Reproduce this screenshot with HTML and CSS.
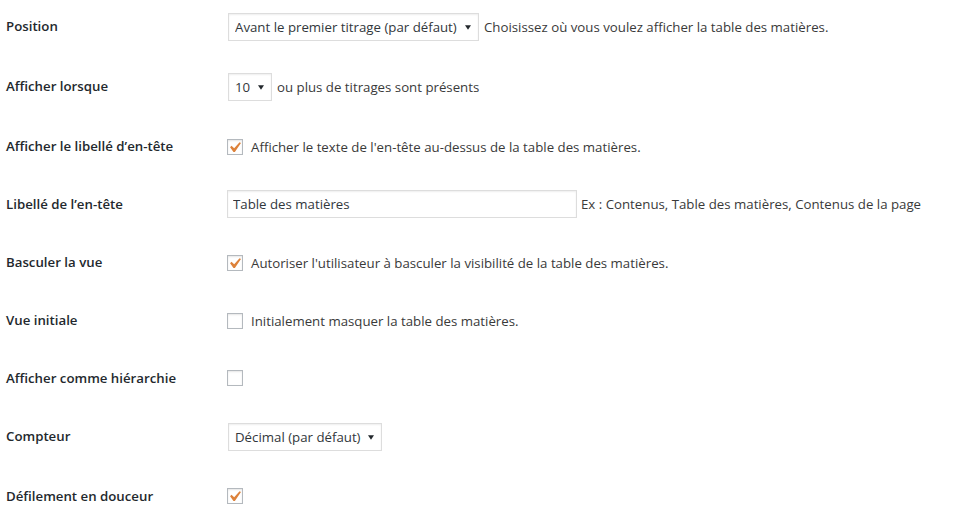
FILE: index.html
```html
<!DOCTYPE html>
<html lang="fr">
<head>
    <meta charset="UTF-8">
    <meta name="viewport" content="width=device-width, initial-scale=1.0">
    <title>Table des matières - Réglages</title>
    <link rel="stylesheet" href="styles.css">
</head>
<body>
    <table class="form-table">
        <tbody>
            <tr>
                <th scope="row">Position</th>
                <td>
                    <div class="field">
                        <span class="select select-position">
                            <select name="position">
                                <option selected>Avant le premier titrage (par défaut)</option>
                                <option>Après le premier titrage</option>
                                <option>En haut</option>
                                <option>En bas</option>
                            </select>
                            <svg class="select-arrow" width="7" height="5" viewBox="0 0 7 5"><polygon points="0,0 7,0 3.5,5"/></svg>
                        </span>
                        <span>Choisissez où vous voulez afficher la table des matières.</span>
                    </div>
                </td>
            </tr>
            <tr>
                <th scope="row">Afficher lorsque</th>
                <td>
                    <div class="field">
                        <span class="select select-count">
                            <select name="start">
                                <option>2</option>
                                <option>3</option>
                                <option selected>10</option>
                            </select>
                            <svg class="select-arrow" width="7" height="5" viewBox="0 0 7 5"><polygon points="0,0 7,0 3.5,5"/></svg>
                        </span>
                        <span>ou plus de titrages sont présents</span>
                    </div>
                </td>
            </tr>
            <tr>
                <th scope="row">Afficher le libellé d’en-tête</th>
                <td class="check-cell">
                    <label class="check-label">
                        <span class="checkbox is-checked">
                            <svg width="21" height="21" viewBox="0 0 20 20"><path d="M14.83 4.89l1.34.94-5.81 8.38H9.02L5.78 9.67l1.34-1.25 2.57 2.4z"/></svg>
                        </span>
                        Afficher le texte de l'en-tête au-dessus de la table des matières.
                    </label>
                </td>
            </tr>
            <tr>
                <th scope="row">Libellé de l’en-tête</th>
                <td>
                    <div class="field">
                        <input type="text" class="regular-text" value="Table des matières">
                        <span>Ex : Contenus, Table des matières, Contenus de la page</span>
                    </div>
                </td>
            </tr>
            <tr>
                <th scope="row">Basculer la vue</th>
                <td class="check-cell">
                    <label class="check-label">
                        <span class="checkbox is-checked">
                            <svg width="21" height="21" viewBox="0 0 20 20"><path d="M14.83 4.89l1.34.94-5.81 8.38H9.02L5.78 9.67l1.34-1.25 2.57 2.4z"/></svg>
                        </span>
                        Autoriser l'utilisateur à basculer la visibilité de la table des matières.
                    </label>
                </td>
            </tr>
            <tr>
                <th scope="row">Vue initiale</th>
                <td class="check-cell">
                    <label class="check-label">
                        <span class="checkbox"></span>
                        Initialement masquer la table des matières.
                    </label>
                </td>
            </tr>
            <tr>
                <th scope="row">Afficher comme hiérarchie</th>
                <td class="check-cell">
                    <label class="check-label">
                        <span class="checkbox"></span>
                    </label>
                </td>
            </tr>
            <tr>
                <th scope="row">Compteur</th>
                <td>
                    <div class="field">
                        <span class="select select-counter">
                            <select name="counter">
                                <option selected>Décimal (par défaut)</option>
                                <option>Chiffres romains</option>
                                <option>Aucun</option>
                            </select>
                            <svg class="select-arrow" width="7" height="5" viewBox="0 0 7 5"><polygon points="0,0 7,0 3.5,5"/></svg>
                        </span>
                    </div>
                </td>
            </tr>
            <tr>
                <th scope="row">Défilement en douceur</th>
                <td class="check-cell">
                    <label class="check-label">
                        <span class="checkbox is-checked">
                            <svg width="21" height="21" viewBox="0 0 20 20"><path d="M14.83 4.89l1.34.94-5.81 8.38H9.02L5.78 9.67l1.34-1.25 2.57 2.4z"/></svg>
                        </span>
                    </label>
                </td>
            </tr>
        </tbody>
    </table>
</body>
</html>
```

FILE: styles.css
```css
body {
    margin: 0;
    background-color: #fff;
    color: #3a3a3a;
    font-family: "Open Sans", "Noto Sans", sans-serif;
    font-size: 13.25px;
}

.form-table {
    border-collapse: collapse;
    margin: -3px 0 0 6px;
}

.form-table th {
    width: 201px;
    padding: 20px 10px 20px 0;
    text-align: left;
    vertical-align: top;
    line-height: 18px;
    font-weight: 600;
    color: #23282d;
}

.form-table td {
    padding: 15px 10px;
    vertical-align: middle;
    line-height: 18px;
}

.form-table td.check-cell {
    padding: 17px 10px 13px;
}

.field {
    display: flex;
    align-items: center;
    gap: 4px;
    white-space: nowrap;
}

/* listes déroulantes */
.select {
    position: relative;
    display: inline-block;
    margin: 1px;
}

.select select {
    display: block;
    height: 28px;
    padding: 0 14px 0 6px;
    border: 1px solid #ddd;
    border-radius: 0;
    background-color: #fff;
    box-shadow: inset 0 1px 2px rgba(0, 0, 0, 0.07);
    color: #32373c;
    font: inherit;
    appearance: none;
    -webkit-appearance: none;
    outline: none;
}

.select-position select {
    width: 251px;
}

.select-count select {
    width: 44px;
}

.select-counter select {
    width: 154px;
}

.select-arrow {
    position: absolute;
    right: 8px;
    top: 12px;
    width: 6px;
    fill: #23282d;
    pointer-events: none;
}

/* champ texte */
.regular-text {
    width: 350px;
    height: 28px;
    margin: 0;
    padding: 0 5px;
    border: 1px solid #ddd;
    box-shadow: inset 0 1px 2px rgba(0, 0, 0, 0.07);
    box-sizing: border-box;
    color: #32373c;
    font: inherit;
    outline: none;
}

/* cases à cocher */
.check-label {
    display: inline-flex;
    align-items: center;
    gap: 8px;
    white-space: nowrap;
    cursor: pointer;
}

.checkbox {
    position: relative;
    flex: none;
    width: 16px;
    height: 16px;
    border: 1px solid #b4b9be;
    background-color: #fff;
    box-shadow: inset 0 1px 2px rgba(0, 0, 0, 0.1);
    box-sizing: border-box;
}

.checkbox svg {
    position: absolute;
    left: -4px;
    top: -3px;
    fill: #dd823b;
}
```
